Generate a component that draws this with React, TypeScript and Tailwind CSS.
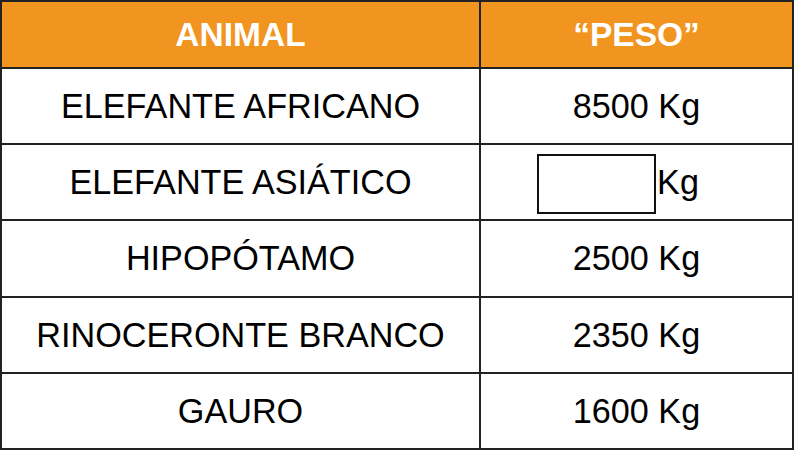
import { Fragment } from "react";

const rows: { animal: string; peso: string | null }[] = [
  { animal: "ELEFANTE AFRICANO", peso: "8500" },
  { animal: "ELEFANTE ASIÁTICO", peso: null },
  { animal: "HIPOPÓTAMO", peso: "2500" },
  { animal: "RINOCERONTE BRANCO", peso: "2350" },
  { animal: "GAURO", peso: "1600" },
];

export default function App() {
  return (
    <div
      className="grid h-[450px] w-[794px] grid-cols-[477px_1fr] grid-rows-[65px_repeat(5,1fr)] gap-[2px] bg-[#222] p-[2px] text-[34.2px] leading-none text-black"
      style={{ fontFamily: '"Liberation Sans", Arial, sans-serif' }}
    >
      {/* cabeçalho */}
      <div className="flex items-center justify-center bg-[#f29420] text-[33.5px] font-bold text-white">
        ANIMAL
      </div>
      <div className="flex items-center justify-center bg-[#f29420] text-[33.5px] font-bold text-white">
        “PESO”
      </div>

      {rows.map((r) => (
        <Fragment key={r.animal}>
          <div className="flex items-center justify-center bg-white">{r.animal}</div>
          <div className="flex items-center justify-center bg-white">
            {r.peso ? (
              `${r.peso} Kg`
            ) : (
              <div className="mr-[37px] flex items-center gap-[1px]">
                <span className="mt-[3px] block h-[60px] w-[119px] border-[2.5px] border-solid border-[#111] bg-white" />
                <span>Kg</span>
              </div>
            )}
          </div>
        </Fragment>
      ))}
    </div>
  );
}
